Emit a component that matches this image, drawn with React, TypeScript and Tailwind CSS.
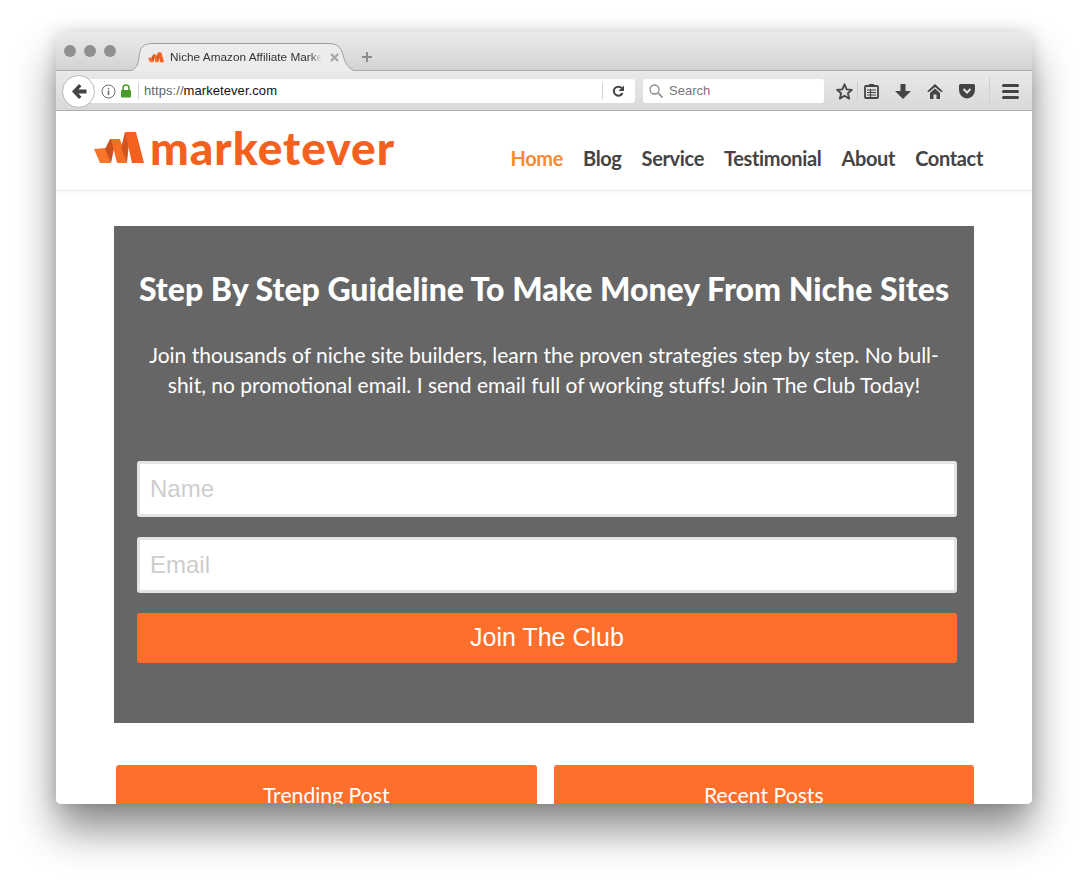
import React from "react";

function Mark({ w, h }: { w: number; h: number }) {
  return (
    <svg width={w} height={h} viewBox="0 0 50 32" className="shrink-0">
      <path d="M0 17 L12 16 L17 31 L6 31 Z" fill="#f8752a" />
      <path d="M11 17 L16 7 L22 7 L17 31 Z" fill="#c9501f" />
      <path d="M17 7 L26 7 L33 31 L23 31 Z" fill="#f76f24" />
      <path d="M27 16 L31 0 L36 0 L33 31 Z" fill="#d2541e" />
      <path d="M31 0 L42 0 L50 31 L38 31 Z" fill="#f4611f" />
    </svg>
  );
}

function Field({ label }: { label: string }) {
  return (
    <div className="h-[56px] bg-white border-[3px] border-[#e4e4e4] rounded-[3px] flex items-center pl-[10px] text-[24px] text-[#cdcdcd] font-['Liberation_Sans',sans-serif]">
      {label}
    </div>
  );
}

export default function App() {
  return (
    <div className="w-[1088px] h-[884px] bg-white pt-[32px] pl-[56px] font-['Lato',sans-serif] overflow-hidden">
      <div className="w-[976px] h-[772px] rounded-[5px] overflow-hidden flex flex-col shadow-[0_26px_42px_rgba(0,0,0,0.45),0_0_16px_rgba(0,0,0,0.15)] bg-white">
        {/* title bar */}
        <div className="h-[39px] shrink-0 flex items-end bg-gradient-to-b from-[#ebebeb] to-[#d3d3d3] border-b border-[#a9a9a9] pl-[8px] relative">
          <div className="flex gap-[8px] self-start mt-[13px]">
            <div className="w-[12px] h-[12px] rounded-full bg-[#8f8f8f]" />
            <div className="w-[12px] h-[12px] rounded-full bg-[#8f8f8f]" />
            <div className="w-[12px] h-[12px] rounded-full bg-[#8f8f8f]" />
          </div>
          <div className="relative ml-[21px] w-[215px] h-[28px] -mb-px flex items-center pl-[11px]">
            <svg width="240" height="29" viewBox="0 0 240 29" className="absolute left-[-14px] top-0">
              <path d="M0 28.5 C11 28.5 15 25 16 14 C17 4 20 0.5 30 0.5 L205 0.5 C214 0.5 218 4 220 12 C223 24 228 28.5 238 28.5" fill="#ececec" stroke="#a0a0a0" strokeWidth="1" />
            </svg>
            <div className="relative flex items-center w-full">
              <Mark w={16} h={11} />
              <span className="ml-[6px] w-[152px] overflow-hidden whitespace-nowrap text-[11.8px] leading-[16px] text-[#333] font-['Liberation_Sans',sans-serif] [mask-image:linear-gradient(to_right,black_92%,transparent)]">Niche Amazon Affiliate Marke</span>
              <svg width="9" height="9" viewBox="0 0 9 9" className="ml-[8px]">
                <path d="M1 1 L8 8 M8 1 L1 8" stroke="#a6a6a6" strokeWidth="2.2" />
              </svg>
            </div>
          </div>
          <svg width="10" height="10" viewBox="0 0 10 10" className="ml-[10px] mb-[8px] relative">
            <path d="M5 0V10M0 5H10" stroke="#8c8c8c" strokeWidth="2" />
          </svg>
        </div>
        {/* toolbar */}
        <div className="h-[40px] pt-px shrink-0 flex items-center bg-gradient-to-b from-[#e9e9e9] to-[#d9d9d9] border-b border-[#b0b0b0] relative">
          <div className="relative z-10 ml-[6px] w-[33px] h-[33px] rounded-full bg-white border border-[#b8b8b8] flex items-center justify-center">
            <svg width="16" height="15" viewBox="0 0 16 15"><path d="M8 0 L1 7.5 L8 15 L10.5 12.8 L7.5 9.5 H15.5 V5.5 H7.5 L10.5 2.2 Z" fill="#444" /></svg>
          </div>
          <div className="-ml-[9px] w-[549px] h-[24px] bg-white rounded-r-[3px] flex items-center pl-[15px] font-['Liberation_Sans',sans-serif]">
            <svg width="15" height="15" viewBox="0 0 15 15" className="shrink-0">
              <circle cx="7.5" cy="7.5" r="6.5" fill="none" stroke="#6b6b6b" strokeWidth="1" />
              <rect x="6.8" y="6.5" width="1.5" height="4.5" fill="#6b6b6b" />
              <rect x="6.8" y="3.8" width="1.5" height="1.5" fill="#6b6b6b" />
            </svg>
            <svg width="12" height="14" viewBox="0 0 12 14" className="ml-[4px] shrink-0">
              <path d="M3 6V4a3 3 0 0 1 6 0v2" fill="none" stroke="#4c9a2a" strokeWidth="1.6" />
              <rect x="1" y="6" width="10" height="7.5" rx="1" fill="#4c9a2a" />
            </svg>
            <div className="ml-[6px] w-px h-[16px] bg-[#d0d0d0]" />
            <span className="ml-[5px] text-[13px] text-[#666] tracking-[0.07px]">https://<span className="text-[#111]">marketever.com</span></span>
            <div className="ml-auto w-px h-[16px] bg-[#d0d0d0]" />
            <svg width="13" height="13" viewBox="0 0 13 13" className="ml-[9px] mr-[10px]">
              <path d="M10.5 8 A4.5 4.5 0 1 1 9.8 3.2" fill="none" stroke="#444" strokeWidth="2" />
              <path d="M12 0.5 V6 H6.5 Z" fill="#444" />
            </svg>
          </div>
          <div className="ml-[8px] w-[181px] h-[24px] bg-white rounded-[3px] flex items-center pl-[6px] font-['Liberation_Sans',sans-serif]">
            <svg width="14" height="14" viewBox="0 0 14 14"><circle cx="5.5" cy="5.5" r="4.5" fill="none" stroke="#8a8a8a" strokeWidth="1.3" /><path d="M9 9 L13.5 13.5" stroke="#8a8a8a" strokeWidth="1.6" /></svg>
            <span className="ml-[6px] text-[13px] text-[#777]">Search</span>
          </div>
          <svg width="17" height="17" viewBox="0 0 16 16" className="ml-[12px]">
            <path d="M8 1.2 L10 6 L15 6.4 L11.2 9.7 L12.4 14.7 L8 12 L3.6 14.7 L4.8 9.7 L1 6.4 L6 6 Z" fill="none" stroke="#444" strokeWidth="1.7" strokeLinejoin="round" />
          </svg>
          <div className="ml-[4px] w-px h-[18px] bg-[#c9c9c9]" />
          <svg width="15" height="16" viewBox="0 0 15 16" className="ml-[6px]">
            <rect x="1" y="3" width="13" height="12" rx="1" fill="none" stroke="#444" strokeWidth="1.8" />
            <rect x="5" y="1" width="5" height="3" fill="#444" />
            <path d="M3 7 H12 M3 9.5 H12 M3 12 H12 M6.5 6 V14" stroke="#444" strokeWidth="1.1" />
          </svg>
          <svg width="16" height="15" viewBox="0 0 16 15" className="ml-[16px]">
            <path d="M5.5 0 H10.5 V7 H16 L8 15 L0 7 H5.5 Z" fill="#444" />
          </svg>
          <svg width="16" height="15" viewBox="0 0 16 15" className="ml-[16px]">
            <path d="M8 0 L16 7.5 L14 8 L8 3 L2 8 L0 7.5 Z" fill="#444" />
            <path d="M8 4.5 L13 9 V15 H9.5 V10.5 H6.5 V15 H3 V9 Z" fill="#444" />
          </svg>
          <svg width="16" height="15" viewBox="0 0 16 15" className="ml-[16px]">
            <path d="M1.5 0 H14.5 A1.5 1.5 0 0 1 16 1.5 V6 A8 8.5 0 0 1 0 6 V1.5 A1.5 1.5 0 0 1 1.5 0 Z" fill="#444" />
            <path d="M4.5 5 L8 8.5 L11.5 5" fill="none" stroke="#e4e4e4" strokeWidth="2" />
          </svg>
          <div className="ml-[14px] w-px h-[28px] bg-[#cfcfcf]" />
          <div className="ml-[12px] w-[17px] flex flex-col gap-[3px]">
            <div className="h-[3px] bg-[#444] rounded-[1.5px]" />
            <div className="h-[3px] bg-[#444] rounded-[1.5px]" />
            <div className="h-[3px] bg-[#444] rounded-[1.5px]" />
          </div>
        </div>
        {/* page */}
        <div className="flex-1 min-h-0 overflow-hidden bg-white">
          <div className="h-[80px] flex border-b border-[#eeeeee] shadow-[0_1px_3px_rgba(0,0,0,0.05)] pl-[38px]">
            <div className="flex items-center h-[76px] mt-[-1px]">
              <Mark w={50} h={32} />
              <span className="ml-[6px] text-[46px] leading-[50px] font-black text-[#f4611f] tracking-[1px]">marketever</span>
            </div>
            <div className="ml-auto mr-[49px] flex gap-[20px] pt-[33px] text-[20px] leading-[28px] font-bold tracking-[-0.35px] text-[#444]">
              <span className="text-[#f98a32]">Home</span>
              <span>Blog</span>
              <span>Service</span>
              <span>Testimonial</span>
              <span>About</span>
              <span>Contact</span>
            </div>
          </div>
          <div className="mt-[35px] mx-[58px] h-[497px] bg-[#666666] pt-[42px]">
            <h1 className="text-[32px] leading-[42px] font-black text-white text-center whitespace-nowrap">Step By Step Guideline To Make Money From Niche Sites</h1>
            <p className="mt-[30px] text-[21px] leading-[30px] text-white text-center px-[30px]">Join thousands of niche site builders, learn the proven strategies step by step. No bull-shit, no promotional email. I send email full of working stuffs! Join The Club Today!</p>
            <div className="ml-[23px] mr-[17px]">
              <div className="mt-[61px] flex flex-col gap-[20px]">
                <Field label="Name" />
                <Field label="Email" />
              </div>
              <div className="mt-[20px] h-[50px] bg-[#ff6f2c] rounded-[3px] flex items-center justify-center text-[25px] text-white font-['Liberation_Sans',sans-serif]">Join The Club</div>
            </div>
          </div>
          <div className="mt-[42px] ml-[60px] mr-[58px] flex gap-[17px]">
            <div className="flex-1 h-[60px] bg-[#ff6f2c] rounded-t-[3px] pt-[15px] text-center text-[21.2px] leading-[30px] text-white">Trending Post</div>
            <div className="flex-1 h-[60px] bg-[#ff6f2c] rounded-t-[3px] pt-[15px] text-center text-[21.2px] leading-[30px] text-white">Recent Posts</div>
          </div>
        </div>
      </div>
    </div>
  );
}
